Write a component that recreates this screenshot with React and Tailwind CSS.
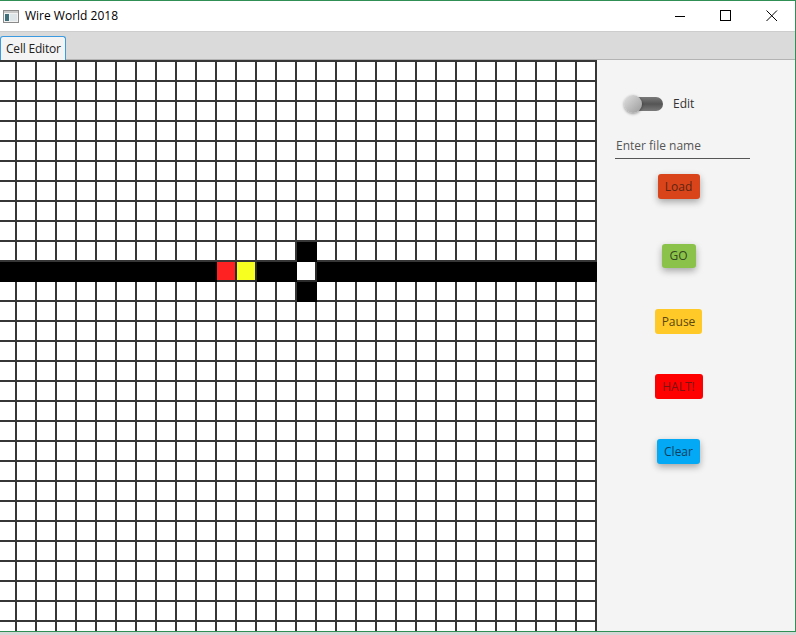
import React from "react";

const ROWS = 29;
const COLS = 30;

function cellColor(r, c) {
  if (r === 10) {
    if (c === 11) return "bg-[#ff2222] border-[#2a2a2a]";
    if (c === 12) return "bg-[#f6ff1f] border-[#2a2a2a]";
    if (c === 15) return "bg-white border-[#2a2a2a]";
    return "bg-black border-black";
  }
  if ((r === 9 || r === 11) && c === 15) return "bg-black border-black";
  return "bg-white border-[#363636]";
}

function Grid() {
  const cells = [];
  for (let r = 0; r < ROWS; r++) {
    for (let c = 0; c < COLS; c++) {
      cells.push(
        <div
          key={r + "-" + c}
          className={"w-[20px] h-[20px] border-r-2 border-b-2 " + cellColor(r, c)}
        />
      );
    }
  }
  return (
    <div className="w-[597px] h-[571px] flex-none overflow-hidden bg-white">
      <div className="-ml-[3px] border-t-2 border-[#363636] grid grid-cols-[repeat(30,20px)] w-[600px]">
        {cells}
      </div>
    </div>
  );
}

function Btn({ label, w, h = "h-[25px]", bg, text, shadow }) {
  return (
    <div
      className={
        "flex items-center justify-center rounded-[3px] text-[12px] leading-none " +
        w + " " + h + " " + bg + " " + text + " " +
        (shadow ? "shadow-[0_3px_7px_rgba(0,0,0,0.32)]" : "")
      }
    >
      {label}
    </div>
  );
}

export default function App() {
  return (
    <div className="w-[796px] h-[635px] bg-[#d6d6d6] overflow-hidden" style={{ fontFamily: '"Open Sans", "Noto Sans", sans-serif' }}>
      <div className="w-[796px] h-[632px] border-t border-r border-b border-[#2f8f55] flex flex-col bg-white">
        {/* Title bar */}
        <div className="h-[30px] flex-none flex items-center bg-white">
          <svg width="16" height="13" viewBox="0 0 16 13" className="ml-[3px] mt-[1px]">
            <rect x="0.5" y="0.5" width="15" height="12" fill="#f2f2f2" stroke="#8a8a8a" />
            <rect x="1" y="1" width="14" height="2" fill="#c8c8c8" />
            <rect x="2" y="4" width="4" height="7" fill="#3d6e7a" />
            <rect x="7" y="4" width="7" height="7" fill="#dfe6ea" />
          </svg>
          <span className="ml-[6px] text-[12px] text-black leading-none">Wire World 2018</span>
          <div className="flex-1" />
          <svg width="12" height="12" viewBox="0 0 12 12" className="mr-[34px]">
            <line x1="1" y1="6.5" x2="11" y2="6.5" stroke="#000" strokeWidth="1" />
          </svg>
          <svg width="12" height="12" viewBox="0 0 12 12" className="mr-[34px]">
            <rect x="0.5" y="0.5" width="10" height="10" fill="none" stroke="#000" strokeWidth="1" />
          </svg>
          <svg width="12" height="12" viewBox="0 0 12 12" className="mr-[17px]">
            <line x1="0.5" y1="0.5" x2="11" y2="11" stroke="#000" strokeWidth="1" />
            <line x1="11" y1="0.5" x2="0.5" y2="11" stroke="#000" strokeWidth="1" />
          </svg>
        </div>
        {/* Tab bar */}
        <div className="h-[29px] flex-none bg-[#dadada] border-t border-[#cdcdcd] border-b border-b-[#b3b3b3] flex items-end">
          <div className="h-[24px] -mb-[1px] w-[66px] bg-[#f4f4f4] border border-b-0 border-[#3c9be0] rounded-t-[3px] flex items-center pl-[5px] text-[12px] text-[#222] leading-none tracking-[-0.2px]">
            Cell Editor
          </div>
        </div>
        {/* Content */}
        <div className="flex flex-1 min-h-0">
          <Grid />
          <div className="flex-1 bg-[#f4f4f4] flex flex-col">
            {/* toggle */}
            <div className="mt-[34px] ml-[27px] h-[20px] flex items-center">
              <div className="relative w-[40px] h-[20px]">
                <div className="absolute left-[6px] top-[3px] w-[33px] h-[14px] rounded-full bg-gradient-to-b from-[#7a7a7a] via-[#555] to-[#7a7a7a]" />
                <div className="absolute left-0 top-[1px] w-[18px] h-[18px] rounded-full bg-gradient-to-br from-[#e2e2e2] to-[#9a9a9a] shadow-[0_1px_3px_rgba(0,0,0,0.4)]" />
              </div>
              <span className="ml-[9px] text-[12px] text-[#333] leading-none">Edit</span>
            </div>
            {/* text field */}
            <div className="mt-[23px] ml-[18px] w-[135px] h-[22px] border-b border-[#555] text-[12px] leading-[16px] text-[#555] pl-[1px] pt-[1px]">
              Enter file name
            </div>
            {/* buttons */}
            <div className="w-[163px] flex flex-col items-center">
              <div className="mt-[15px]">
                <Btn label="Load" w="w-[42px]" bg="bg-[#d9441a]" text="text-[#5c2412]" shadow />
              </div>
              <div className="mt-[45px]">
                <Btn label="GO" w="w-[34px]" h="h-[24px]" bg="bg-[#8bc34a]" text="text-[#34491f]" shadow />
              </div>
              <div className="mt-[41px]">
                <Btn label="Pause" w="w-[47px]" bg="bg-[#ffca28]" text="text-[#5a4713]" />
              </div>
              <div className="mt-[40px]">
                <Btn label="HALT!" w="w-[48px]" bg="bg-[#ff0000]" text="text-[#7a1212]" />
              </div>
              <div className="mt-[40px]">
                <Btn label="Clear" w="w-[43px]" bg="bg-[#03a9f4]" text="text-[#0d3f5e]" shadow />
              </div>
            </div>
          </div>
        </div>
      </div>
    </div>
  );
}
